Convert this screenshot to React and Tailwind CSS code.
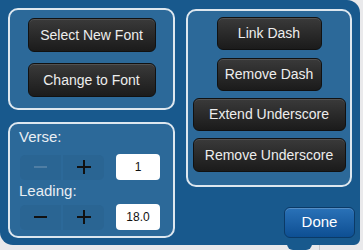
import React from 'react';

const font = { fontFamily: '"Liberation Sans", Arial, sans-serif' };

function DarkButton({ children, className = '' }) {
  return (
    <button
      className={`flex items-center justify-center rounded-[6px] border border-[#111] bg-gradient-to-b from-[#3a3a3a] to-[#1b1b1b] text-[14px] text-[#ededed] shadow-[inset_0_1px_0_rgba(255,255,255,0.12)] ${className}`}
    >
      {children}
    </button>
  );
}

function Stepper({ minusDisabled, value }) {
  return (
    <div className="flex items-center">
      <div className="flex">
        <button className="w-[41px] h-[25px] rounded-l-[5px] bg-[#2a6593] flex items-center justify-center">
          <span className={`block w-[13px] h-[2px] ${minusDisabled ? 'bg-[#4f7ea4]' : 'bg-[#111]'}`} />
        </button>
        <button className="ml-[2px] w-[41px] h-[25px] rounded-r-[5px] bg-[#2a6593] flex items-center justify-center relative">
          <span className="block w-[14px] h-[2px] bg-[#111]" />
          <span className="absolute w-[2px] h-[14px] bg-[#111]" />
        </button>
      </div>
      <div className="ml-[12px] w-[44px] h-[26px] rounded-[4px] bg-white flex items-center justify-center text-[12px] text-[#111]">
        {value}
      </div>
    </div>
  );
}

export default function App() {
  return (
    <div className="w-[363px] h-[250px] bg-[#e9e9eb] relative overflow-hidden" style={font}>
      <div className="w-[360px] h-[245px] bg-[#18598d] rounded-tr-[13px] rounded-bl-[13px] rounded-br-[6px] px-[8px] pt-[8px] flex gap-[11px]">
        {/* left column */}
        <div className="w-[167px] flex flex-col gap-[12px]">
          <div className="h-[102px] rounded-[10px] border-2 border-[#dde7ef] bg-[#2c6999] flex flex-col items-center pt-[8px] gap-[11px]">
            <DarkButton className="w-[128px] h-[34px]">Select New Font</DarkButton>
            <DarkButton className="w-[128px] h-[34px]">Change to Font</DarkButton>
          </div>
          <div className="h-[116px] rounded-[10px] border-2 border-[#dde7ef] bg-[#2c6999] pl-[10px] pt-[3px]">
            <div className="text-[15px] text-[#e9eef3] leading-[20px] ml-[-1px]">Verse:</div>
            <div className="mt-[7px]">
              <Stepper minusDisabled value="1" />
            </div>
            <div className="text-[15px] text-[#e9eef3] leading-[20px] ml-[-1px] mt-[1px]">Leading:</div>
            <div className="mt-[3px]">
              <Stepper value="18.0" />
            </div>
          </div>
        </div>
        {/* right column */}
        <div className="w-[166px] flex flex-col">
          <div className="mt-[1px] h-[178px] rounded-[10px] border-2 border-[#dde7ef] bg-[#2c6999] flex flex-col items-center pt-[6px]">
            <DarkButton className="w-[105px] h-[33px]">Link Dash</DarkButton>
            <DarkButton className="mt-[8px] w-[105px] h-[33px]">Remove Dash</DarkButton>
            <DarkButton className="mt-[7px] w-[153px] h-[33px]">Extend Underscore</DarkButton>
            <DarkButton className="mt-[7px] w-[153px] h-[34px]">Remove Underscore</DarkButton>
          </div>
          <div className="flex justify-end mt-[20px] pr-[-3px]">
            <button className="mr-[-3px] w-[71px] h-[31px] rounded-[6px] border border-[#0b3a66] bg-gradient-to-b from-[#2a72b8] to-[#0d4f93] text-[15px] text-white shadow-[inset_0_1px_0_rgba(255,255,255,0.2)]">
              Done
            </button>
          </div>
        </div>
      </div>
      <div className="absolute left-[287px] top-[244px] w-[25px] h-[6px] bg-[#18598d] rounded-b-[6px]" />
      <div className="absolute left-[319px] top-[245px] w-[1px] h-[5px] bg-[#c8c8cc]" />
    </div>
  );
}
